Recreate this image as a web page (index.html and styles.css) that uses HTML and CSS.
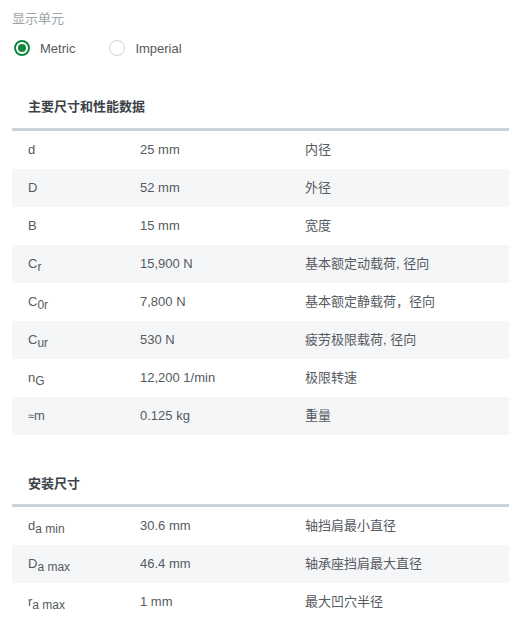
FILE: index.html
```html
<!DOCTYPE html>
<html lang="zh">
<head>
<meta charset="utf-8">
<link rel="stylesheet" href="styles.css">
</head>
<body>
<div class="page">
  <div class="units">
    <div class="units-label">显示单元</div>
    <div class="radios">
      <label class="radio"><span class="dot checked"></span><span>Metric</span></label>
      <label class="radio"><span class="dot"></span><span>Imperial</span></label>
    </div>
  </div>

  <section class="section">
    <div class="section-title">主要尺寸和性能数据</div>
    <div class="table">
      <div class="row"><div class="c1">d</div><div class="c2">25 mm</div><div class="c3">内径</div></div>
      <div class="row alt"><div class="c1">D</div><div class="c2">52 mm</div><div class="c3">外径</div></div>
      <div class="row"><div class="c1">B</div><div class="c2">15 mm</div><div class="c3">宽度</div></div>
      <div class="row alt"><div class="c1">C<sub>r</sub></div><div class="c2">15,900 N</div><div class="c3">基本额定动载荷, 径向</div></div>
      <div class="row"><div class="c1">C<sub>0r</sub></div><div class="c2">7,800 N</div><div class="c3">基本额定静载荷，径向</div></div>
      <div class="row alt"><div class="c1">C<sub>ur</sub></div><div class="c2">530 N</div><div class="c3">疲劳极限载荷, 径向</div></div>
      <div class="row"><div class="c1">n<sub>G</sub></div><div class="c2">12,200 1/min</div><div class="c3">极限转速</div></div>
      <div class="row alt"><div class="c1"><span class="approx">≈</span>m</div><div class="c2">0.125 kg</div><div class="c3">重量</div></div>
    </div>
  </section>

  <section class="section second">
    <div class="section-title">安装尺寸</div>
    <div class="table">
      <div class="row"><div class="c1">d<sub>a min</sub></div><div class="c2">30.6 mm</div><div class="c3">轴挡肩最小直径</div></div>
      <div class="row alt"><div class="c1">D<sub>a max</sub></div><div class="c2">46.4 mm</div><div class="c3">轴承座挡肩最大直径</div></div>
      <div class="row"><div class="c1">r<sub>a max</sub></div><div class="c2">1 mm</div><div class="c3">最大凹穴半径</div></div>
    </div>
  </section>
</div>
</body>
</html>
```

FILE: styles.css
```css
* { box-sizing: border-box; }
html, body { margin: 0; padding: 0; background: #fff; }
body {
  font-family: "Liberation Sans", Arial, "Noto Sans CJK SC", sans-serif;
  font-size: 13px;
  color: #555a60;
}
.page {
  padding: 0 0 0 12px;
}
.units {
  padding-top: 9px;
}
.units-label {
  color: #a0a4a8;
  font-size: 13px;
  line-height: 20px;
}
.radios {
  display: flex;
  gap: 32px;
  margin-top: 9px;
  height: 20px;
  align-items: center;
}
.radio {
  display: flex;
  align-items: center;
  gap: 10px;
  font-size: 13px;
  color: #555a60;
}
.dot {
  width: 16px;
  height: 16px;
  border-radius: 50%;
  border: 1.5px solid #cfd4d9;
  display: inline-block;
  position: relative;
  margin-left: 2px;
}
.dot.checked {
  border: 2px solid #0f8a3c;
}
.dot.checked::after {
  content: "";
  position: absolute;
  left: 2px;
  top: 2px;
  width: 8px;
  height: 8px;
  border-radius: 50%;
  background: #0f8a3c;
}
.section {
  margin-top: 39px;
}
.section.second {
  margin-top: 39px;
}
.section-title {
  font-weight: bold;
  color: #3d4248;
  font-size: 13px;
  line-height: 20px;
  padding: 0 16px 11px;
  border-bottom: 3px solid #cdd3da;
}
.section.second .section-title {
  padding-bottom: 10px;
}
.row {
  display: grid;
  grid-template-columns: 112px 165px 1fr;
  height: 38px;
  align-items: center;
  padding-left: 16px;
  line-height: 20px;
}
.row.alt {
  background: #f5f6f8;
}
.c1 { white-space: nowrap; }
sub {
  font-size: 12px;
  vertical-align: -3px;
  line-height: 0;
}
.approx { font-size: 11px; }
```
